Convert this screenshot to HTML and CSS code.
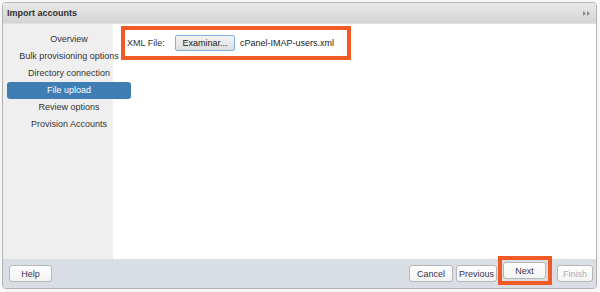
FILE: index.html
```html
<!DOCTYPE html>
<html lang="en">
<head>
    <meta charset="UTF-8">
    <title>Import accounts</title>
    <link rel="stylesheet" href="styles.css">
</head>
<body>
    <div class="panel">
        <div class="panel-header">
            <span class="panel-title">Import accounts</span>
            <svg class="collapse-icon" width="7" height="5" viewBox="0 0 7 5">
                <polygon points="0,0 3,2.5 0,5" fill="#8a8a8a"/>
                <polygon points="4,0 7,2.5 4,5" fill="#8a8a8a"/>
            </svg>
        </div>

        <div class="panel-body">
            <!-- Wizard steps -->
            <div class="steps">
                <ul class="step-list">
                    <li>Overview</li>
                    <li>Bulk provisioning options</li>
                    <li>Directory connection</li>
                    <li class="active">File upload</li>
                    <li>Review options</li>
                    <li>Provision Accounts</li>
                </ul>
            </div>

            <div class="step-content">
                <div class="highlight file-row">
                    <span class="file-label">XML File:</span>
                    <button class="browse-button">Examinar...</button>
                    <span class="file-name">cPanel-IMAP-users.xml</span>
                </div>
            </div>
        </div>

        <div class="panel-footer">
            <button class="btn btn-help">Help</button>
            <div class="spacer"></div>
            <button class="btn btn-cancel">Cancel</button>
            <button class="btn btn-previous">Previous</button>
            <div class="highlight next-wrap">
                <button class="btn btn-next">Next</button>
            </div>
            <button class="btn btn-finish" disabled>Finish</button>
        </div>
    </div>
</body>
</html>
```

FILE: styles.css
```css
body {
    margin: 0;
    background-color: #f7f7f7;
    font-family: "Liberation Sans", Arial, sans-serif;
    font-size: 9px;
    color: #333;
}
.panel {
    margin: 2px 3px 0 2px;
    height: 287px;
    box-sizing: border-box;
    border: 1px solid #b3b3b3;
    border-radius: 4px;
    display: flex;
    flex-direction: column;
    overflow: hidden;
    background-color: #fff;
}
.panel-header {
    height: 20px;
    flex-shrink: 0;
    display: flex;
    align-items: center;
    justify-content: space-between;
    padding: 0 6px 0 4px;
    background: linear-gradient(#e9e9e9, #d4d4d4);
    border-bottom: 1px solid #dedede;
}
.panel-title {
    font-weight: bold;
    color: #2f2f2f;
}
.collapse-icon {
    display: block;
}
.panel-body {
    flex: 1;
    display: flex;
    min-height: 0;
}
.steps {
    width: 110px;
    flex-shrink: 0;
    background-color: #efefef;
    position: relative;
    z-index: 1;
}
.step-list {
    list-style: none;
    margin: 0;
    padding: 7px 0 0 4px;
    width: 124px;
}
.step-list li {
    height: 17px;
    line-height: 17px;
    text-align: center;
    white-space: nowrap;
    color: #333;
}
.step-list li.active {
    background-color: #3f7db5;
    color: #fff;
    border-radius: 3px;
}
.step-content {
    flex: 1;
    padding: 2px 8px;
    background-color: #fff;
}
.highlight {
    border: 4px solid #f15a24;
    box-sizing: border-box;
}
.file-row {
    width: 230px;
    height: 34px;
    display: flex;
    align-items: center;
    padding-left: 2px;
}
.file-label {
    width: 48px;
    color: #333;
}
.browse-button {
    width: 60px;
    height: 16px;
    padding: 0;
    margin-right: 5px;
    font-family: inherit;
    font-size: 9px;
    color: #222;
    background: linear-gradient(#f4f4f4, #dedede);
    border: 1px solid #7db2e6;
    border-radius: 2px;
}
.file-name {
    color: #222;
}
.panel-footer {
    height: 29px;
    flex-shrink: 0;
    display: flex;
    align-items: center;
    padding: 0 3px 0 6px;
    background-color: #d9dde4;
}
.spacer {
    flex: 1;
}
.btn {
    height: 17px;
    padding: 0;
    font-family: inherit;
    font-size: 9px;
    color: #3a3550;
    background: linear-gradient(#ffffff, #f3f3f3);
    border: 1px solid #b7b7b7;
    border-radius: 3px;
}
.btn-help {
    width: 43px;
}
.btn-cancel {
    width: 44px;
    margin-right: 3px;
}
.btn-previous {
    width: 41px;
    margin-right: 1px;
}
.next-wrap {
    height: 29px;
    margin-top: -6px;
    padding: 0 2px 0 1px;
    display: flex;
    align-items: center;
}
.btn-next {
    width: 43px;
}
.btn-finish {
    width: 36px;
    margin-left: 5px;
    color: #b0b0b0;
}
```
